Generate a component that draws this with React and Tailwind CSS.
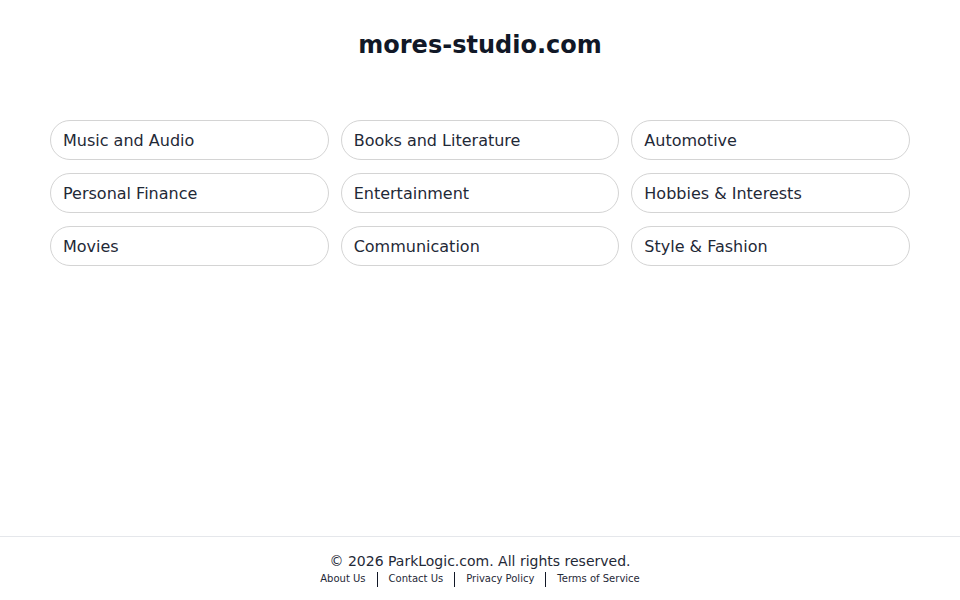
import React from "react";

const categories = [
    "Music and Audio",
    "Books and Literature",
    "Automotive",
    "Personal Finance",
    "Entertainment",
    "Hobbies & Interests",
    "Movies",
    "Communication",
    "Style & Fashion",
];

const links = ["About Us", "Contact Us", "Privacy Policy", "Terms of Service"];

function App() {
    return (
        <div className="min-h-screen flex flex-col bg-white text-[#1f2937]" style={{ fontFamily: '"DejaVu Sans", sans-serif' }}>
            <main className="flex-grow px-[50px]">
                <h1 className="pt-[29px] text-center text-[24px] leading-8 font-bold text-[#111827]">mores-studio.com</h1>
                <div className="mt-[59px] grid grid-cols-3 gap-x-3 gap-y-[13px]">
                    {categories.map((c) => (
                        <a key={c} href="#" className="h-10 flex items-center pt-px px-[12px] rounded-full border border-[#d4d4d4] text-[16px] text-[#1f2937]">
                            {c}
                        </a>
                    ))}
                </div>
            </main>
            <footer className="border-t border-[#e5e7eb] pt-[14px] pb-[13px] text-center">
                <p className="text-[14px] leading-5 text-[#1f2937]">© 2026 ParkLogic.com. All rights reserved.</p>
                <div className="flex justify-center items-center text-[10px] leading-4 text-[#1f2937]">
                    {links.map((l, i) => (
                        <React.Fragment key={l}>
                            {i > 0 && <span className="mx-[11px] h-[15px] border-l border-[#111827]"></span>}
                            <a href="#">{l}</a>
                        </React.Fragment>
                    ))}
                </div>
            </footer>
        </div>
    );
}

export default App;
